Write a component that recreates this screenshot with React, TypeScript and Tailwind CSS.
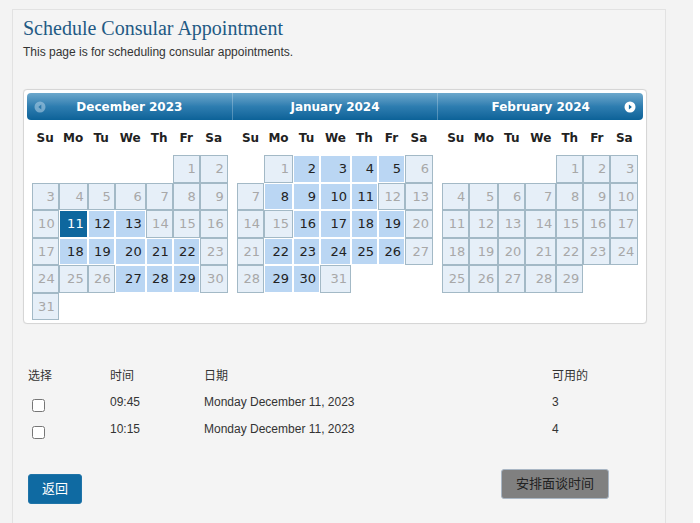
import React from "react";

type Month = {
  name: string;
  start: number;
  days: number;
  open: number[];
  selected?: number;
};

const months: Month[] = [
  {
    name: "December 2023",
    start: 5,
    days: 31,
    open: [12, 13, 18, 19, 20, 21, 22, 27, 28, 29],
    selected: 11,
  },
  {
    name: "January 2024",
    start: 1,
    days: 31,
    open: [2, 3, 4, 5, 8, 9, 10, 11, 16, 17, 18, 19, 22, 23, 24, 25, 26, 29, 30],
  },
  { name: "February 2024", start: 4, days: 29, open: [] },
];

const weekdays = ["Su", "Mo", "Tu", "We", "Th", "Fr", "Sa"];

const slots = [
  { time: "09:45", date: "Monday December 11, 2023", free: 3 },
  { time: "10:15", date: "Monday December 11, 2023", free: 4 },
];

function DayCell({ day, month }: { day: number | null; month: Month }) {
  if (day === null) return <div />;
  if (day === month.selected) {
    return (
      <div className="flex items-center justify-end border border-white bg-[#0e679e] pr-[3px] text-white">
        {day}
      </div>
    );
  }
  if (month.open.includes(day)) {
    return (
      <div className="flex items-center justify-end border border-white bg-[#bad6f3] pr-[3px] text-[#222]">
        {day}
      </div>
    );
  }
  return (
    <div className="flex items-center justify-end border border-[#a3b9c6] bg-[#e6eff8] pr-[3px] text-[#a8a8a8]">
      {day}
    </div>
  );
}

function MonthGrid({ month }: { month: Month }) {
  const cells: (number | null)[] = [];
  for (let i = 0; i < month.start; i++) cells.push(null);
  for (let d = 1; d <= month.days; d++) cells.push(d);

  return (
    <div className="flex-1">
      <div className="mx-auto grid w-[196px] grid-cols-[27px_29px_27px_31px_27px_27px_28px] grid-rows-[35px] auto-rows-[27.5px] text-[13px]">
        {weekdays.map((w) => (
          <div
            key={w}
            className="flex items-center justify-center text-[12px] font-bold text-[#222]"
          >
            {w}
          </div>
        ))}
        {cells.map((d, i) => (
          <DayCell key={i} day={d} month={month} />
        ))}
      </div>
    </div>
  );
}

function Calendar() {
  return (
    <div className="mt-[30px] w-[624px] rounded-[4px] border border-[#d6d6d6] bg-white p-[3px] font-['DejaVu_Sans',Verdana,sans-serif] shadow-[0_0_1px_rgba(0,0,0,0.08)]">
      {/* header */}
      <div className="relative flex h-[27px] rounded-[4px] bg-linear-to-b from-[#6ca8cc] via-[#2d7db0] to-[#0b6298] text-[12px] font-bold text-white">
        {months.map((m, i) => (
          <div
            key={m.name}
            className={
              i === 0
                ? "flex flex-1 items-center justify-center"
                : "flex flex-1 items-center justify-center border-l border-white/25"
            }
          >
            {m.name}
          </div>
        ))}
        <svg
          className="absolute top-[8px] left-[7px] opacity-60"
          width="12"
          height="12"
          viewBox="0 0 12 12"
        >
          <circle cx="6" cy="6" r="5.5" fill="#a9cbe2" />
          <path d="M7.3 3.6 L4.3 6 L7.3 8.4 Z" fill="#2f7aac" />
        </svg>
        <svg
          className="absolute top-[8px] right-[7px]"
          width="12"
          height="12"
          viewBox="0 0 12 12"
        >
          <circle cx="6" cy="6" r="5.5" fill="#ffffff" />
          <path d="M4.9 3.6 L7.9 6 L4.9 8.4 Z" fill="#136aa1" />
        </svg>
      </div>

      {/* month tables */}
      <div className="flex">
        {months.map((m) => (
          <MonthGrid key={m.name} month={m} />
        ))}
      </div>
    </div>
  );
}

export default function App() {
  return (
    <div className="flex h-[523px] w-[700px] overflow-hidden bg-white">
      <div className="h-full w-[693px] bg-[#f3f3f3] pt-[9px] pl-[12px]">
        <div className="h-full w-[654px] border-x border-t border-[#e2e2e2] bg-[#f4f4f4] px-[10px] pt-[7px] font-['Liberation_Sans','Noto_Sans_CJK_SC',sans-serif]">
          <h1 className="font-['Liberation_Serif',serif] text-[20px] leading-[23px] text-[#1f5a84]">
            Schedule Consular Appointment
          </h1>
          <p className="mt-[5px] text-[12px] leading-[14px] text-[#333]">
            This page is for scheduling consular appointments.
          </p>

          <Calendar />

          {/* slots */}
          <div className="mt-[38px] ml-[5px] text-[12px] leading-[14px] text-[#333]">
            <div className="flex h-[27px] items-center">
              <div className="w-[82px]">选择</div>
              <div className="w-[94px]">时间</div>
              <div className="w-[348px]">日期</div>
              <div>可用的</div>
            </div>
            {slots.map((s) => (
              <div key={s.time} className="flex h-[27px] items-start">
                <div className="w-[82px] pt-[10px] pl-[4px]">
                  <input type="checkbox" className="m-0 block h-[13px] w-[13px]" />
                </div>
                <div className="w-[94px] pt-[6px]">{s.time}</div>
                <div className="w-[348px] pt-[6px]">{s.date}</div>
                <div className="pt-[6px]">{s.free}</div>
              </div>
            ))}
          </div>

          {/* buttons */}
          <div className="mt-[26px] ml-[5px] flex w-[581px] items-start justify-between text-[13px]">
            <button className="mt-[5px] h-[30px] w-[54px] rounded-[3px] border border-[#1f74a8] bg-[#0f6aa2] text-white">
              返回
            </button>
            <button className="h-[30px] w-[108px] rounded-[3px] border border-[#a9b6c4] bg-[#808080] text-[#222]">
              安排面谈时间
            </button>
          </div>
        </div>
      </div>
    </div>
  );
}
